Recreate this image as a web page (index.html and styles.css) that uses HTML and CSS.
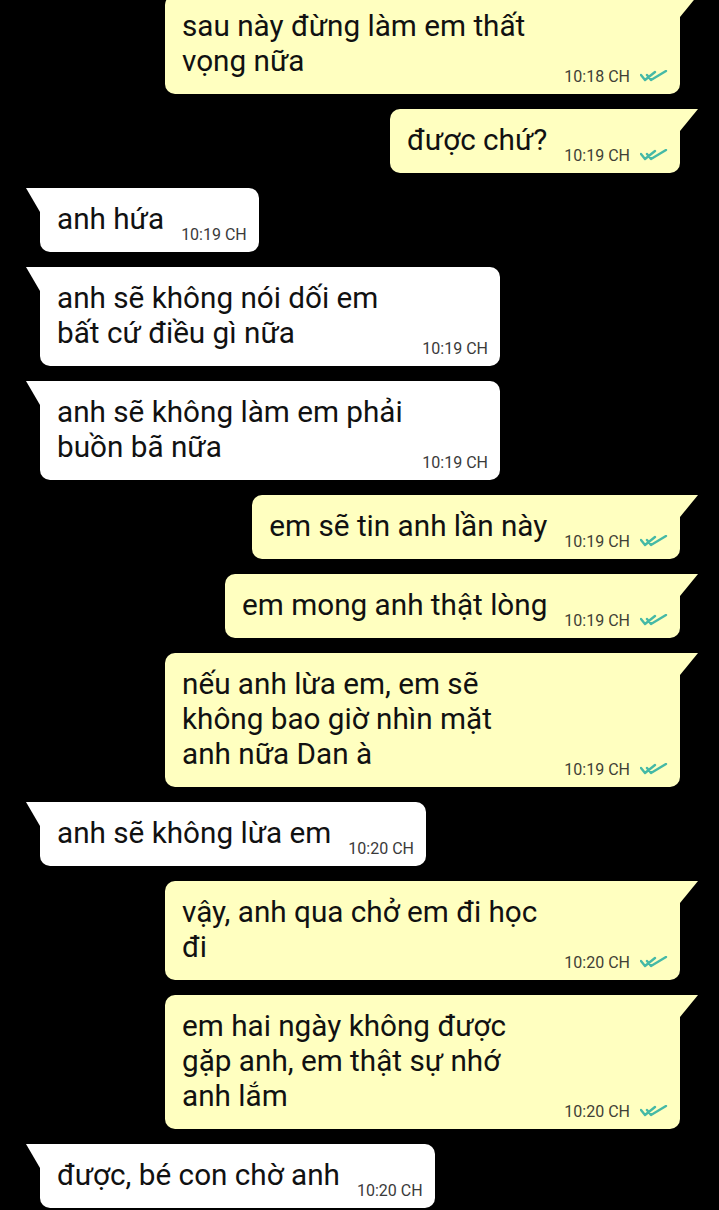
FILE: index.html
```html
<!DOCTYPE html>
<html lang="vi">
<head>
  <meta charset="UTF-8" />
  <meta name="viewport" content="width=device-width, initial-scale=1.0" />
  <title>Chat</title>
  <link rel="stylesheet" href="styles.css">
</head>
<body>

  <!-- === CHAT === -->
  <div class="chat">

    <div class="msg out multi">
      <p class="text">sau này đừng làm em thất<br>vọng nữa</p>
      <div class="meta"><span class="time">10:18 CH</span><svg class="ticks" viewBox="0 0 28 12"><path d="M1 5 L5 10 L15 2 M7 5 L11 10 L26 1"/></svg></div>
    </div>

    <div class="msg out">
      <p class="text">được chứ?</p>
      <div class="meta"><span class="time">10:19 CH</span><svg class="ticks" viewBox="0 0 28 12"><path d="M1 5 L5 10 L15 2 M7 5 L11 10 L26 1"/></svg></div>
    </div>

    <div class="msg in">
      <p class="text">anh hứa</p>
      <div class="meta"><span class="time">10:19 CH</span></div>
    </div>

    <div class="msg in multi">
      <p class="text">anh sẽ không nói dối em<br>bất cứ điều gì nữa</p>
      <div class="meta"><span class="time">10:19 CH</span></div>
    </div>

    <div class="msg in multi">
      <p class="text">anh sẽ không làm em phải<br>buồn bã nữa</p>
      <div class="meta"><span class="time">10:19 CH</span></div>
    </div>

    <div class="msg out">
      <p class="text">em sẽ tin anh lần này</p>
      <div class="meta"><span class="time">10:19 CH</span><svg class="ticks" viewBox="0 0 28 12"><path d="M1 5 L5 10 L15 2 M7 5 L11 10 L26 1"/></svg></div>
    </div>

    <div class="msg out">
      <p class="text">em mong anh thật lòng</p>
      <div class="meta"><span class="time">10:19 CH</span><svg class="ticks" viewBox="0 0 28 12"><path d="M1 5 L5 10 L15 2 M7 5 L11 10 L26 1"/></svg></div>
    </div>

    <div class="msg out multi">
      <p class="text">nếu anh lừa em, em sẽ<br>không bao giờ nhìn mặt<br>anh nữa Dan à</p>
      <div class="meta"><span class="time">10:19 CH</span><svg class="ticks" viewBox="0 0 28 12"><path d="M1 5 L5 10 L15 2 M7 5 L11 10 L26 1"/></svg></div>
    </div>

    <div class="msg in">
      <p class="text">anh sẽ không lừa em</p>
      <div class="meta"><span class="time">10:20 CH</span></div>
    </div>

    <div class="msg out multi">
      <p class="text">vậy, anh qua chở em đi học<br>đi</p>
      <div class="meta"><span class="time">10:20 CH</span><svg class="ticks" viewBox="0 0 28 12"><path d="M1 5 L5 10 L15 2 M7 5 L11 10 L26 1"/></svg></div>
    </div>

    <div class="msg out multi">
      <p class="text">em hai ngày không được<br>gặp anh, em thật sự nhớ<br>anh lắm</p>
      <div class="meta"><span class="time">10:20 CH</span><svg class="ticks" viewBox="0 0 28 12"><path d="M1 5 L5 10 L15 2 M7 5 L11 10 L26 1"/></svg></div>
    </div>

    <div class="msg in">
      <p class="text">được, bé con chờ anh</p>
      <div class="meta"><span class="time">10:20 CH</span></div>
    </div>

  </div>

</body>
</html>
```

FILE: styles.css
```css
* {
  margin: 0;
  padding: 0;
  box-sizing: border-box;
}

body, html {
  height: 100%;
  overflow: hidden;
  font-family: Roboto, "Noto Sans", sans-serif;
}

body {
  background: #000;
  color: #111;
}

.chat {
  display: flex;
  flex-direction: column;
  gap: 15px;
  margin-top: -5px;
  padding: 0 39px 0 40px;
}

/* === BUBLINY === */
.msg {
  position: relative;
  display: flex;
  align-items: flex-end;
  padding: 13px 12px 16px 17px;
  border-radius: 10px;
}

.msg::before {
  content: "";
  position: absolute;
  top: 0;
  background: inherit;
}

.out {
  align-self: flex-end;
  background: #ffffc0;
  border-top-right-radius: 0;
}

.out::before {
  left: 100%;
  width: 18px;
  height: 22px;
  clip-path: polygon(0 0, 100% 0, 0 100%);
}

.in {
  align-self: flex-start;
  background: #fff;
  border-top-left-radius: 0;
}

.in::before {
  right: 100%;
  width: 14px;
  height: 24px;
  clip-path: polygon(0 0, 100% 0, 100% 100%);
}

.out.multi {
  width: 515px;
}

.in.multi {
  width: 460px;
}

.text {
  font-size: 29.7px;
  line-height: 35px;
  white-space: nowrap;
}

.multi .text {
  flex: 1;
}

.meta {
  display: flex;
  align-items: center;
  gap: 10px;
  margin-left: 17px;
  margin-bottom: -7px;
  font-size: 16px;
  line-height: 16px;
  white-space: nowrap;
}

.out .time {
  color: #3f3f36;
}

.in .time {
  color: #3a3a3a;
}

.ticks {
  width: 28px;
  height: 12px;
  margin-top: -2px;
  fill: none;
  stroke: #45b9a6;
  stroke-width: 2.4;
  stroke-linecap: round;
  stroke-linejoin: round;
}
```
